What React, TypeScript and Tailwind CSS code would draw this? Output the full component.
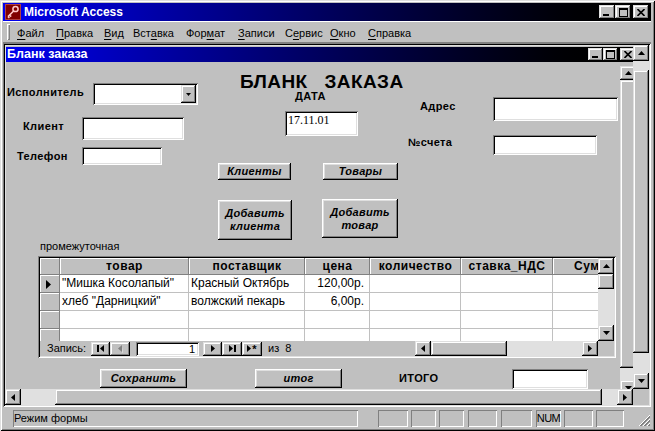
import React from 'react'

const RAISED = 'shadow-[inset_-1px_-1px_#000,inset_1px_1px_#fff,inset_-2px_-2px_#808080,inset_2px_2px_#dfdfdf]'
const SBTN = 'shadow-[inset_-1px_-1px_#000,inset_1px_1px_#dfdfdf,inset_-2px_-2px_#808080,inset_2px_2px_#fff]'
const SUNKEN = 'shadow-[inset_1px_1px_#808080,inset_-1px_-1px_#fff,inset_2px_2px_#000,inset_-2px_-2px_#dfdfdf]'
const THIN_UP = 'shadow-[inset_-1px_-1px_#808080,inset_1px_1px_#fff]'
const THIN_DOWN = 'shadow-[inset_1px_1px_#808080,inset_-1px_-1px_#fff]'
const TRACK = 'bg-[#e0e0e0]'
const THUMB = `bg-[#c0c0c0] ${SBTN}`

type Dir = 'up' | 'down' | 'left' | 'right'

function Tri({ dir, color = '#000' }: { dir: Dir; color?: string }) {
  const vertical = dir === 'up' || dir === 'down'
  const w = vertical ? 7 : 4
  const h = vertical ? 4 : 7
  const pts = {
    up: '3.5,0 7,4 0,4',
    down: '0,0 7,0 3.5,4',
    left: '4,0 4,7 0,3.5',
    right: '0,0 4,3.5 0,7',
  }[dir]
  return (
    <svg width={w} height={h} viewBox={`0 0 ${w} ${h}`}>
      <polygon points={pts} fill={color} />
    </svg>
  )
}

function SBtn({ dir, className }: { dir: Dir; className: string }) {
  return (
    <div className={`shrink-0 bg-[#c0c0c0] flex items-center justify-center ${SBTN} ${className}`}>
      <Tri dir={dir} />
    </div>
  )
}

function CapBtn({ kind, className }: { kind: 'min' | 'max' | 'close'; className: string }) {
  return (
    <div className={`shrink-0 bg-[#c0c0c0] flex justify-center ${SBTN} ${kind === 'min' ? 'items-end pb-[3px]' : 'items-center'} ${className}`}>
      {kind === 'min' && (
        <svg width="8" height="2" viewBox="0 0 8 2">
          <rect x="0" y="0" width="6" height="2" fill="#000" />
        </svg>
      )}
      {kind === 'max' && (
        <svg width="9" height="9" viewBox="0 0 9 9">
          <rect x="0.5" y="0.5" width="8" height="8" fill="none" stroke="#000" />
          <rect x="0" y="0" width="9" height="2" fill="#000" />
        </svg>
      )}
      {kind === 'close' && (
        <svg width="8" height="7" viewBox="0 0 8 7">
          <path d="M0.5 0 L7.5 7 M7.5 0 L0.5 7" stroke="#000" strokeWidth="1.6" />
        </svg>
      )}
    </div>
  )
}

function Label({ className, children }: { className: string; children: React.ReactNode }) {
  return <span className={`shrink-0 text-[11px] font-bold leading-none tracking-[0.4px] whitespace-nowrap ${className}`}>{children}</span>
}

function Field({ className, children }: { className: string; children?: React.ReactNode }) {
  return <div className={`shrink-0 bg-white ${SUNKEN} ${className}`}>{children}</div>
}

function FBtn({ className, children }: { className: string; children: React.ReactNode }) {
  return (
    <div className={`shrink-0 bg-[#c0c0c0] ${RAISED} flex items-center justify-center text-center text-[11px] font-bold italic tracking-[0.3px] leading-[13px] ${className}`}>
      {children}
    </div>
  )
}

const MENU = [
  { pre: '', u: 'Ф', post: 'айл', w: 'w-[39px]' },
  { pre: '', u: 'П', post: 'равка', w: 'w-[48px]' },
  { pre: '', u: 'В', post: 'ид', w: 'w-[29px]' },
  { pre: 'Вст', u: 'а', post: 'вка', w: 'w-[53px]' },
  { pre: 'Фор', u: 'м', post: 'ат', w: 'w-[52px]' },
  { pre: '', u: 'З', post: 'аписи', w: 'w-[47px]' },
  { pre: 'С', u: 'е', post: 'рвис', w: 'w-[45px]' },
  { pre: '', u: 'О', post: 'кно', w: 'w-[38px]' },
  { pre: '', u: 'С', post: 'правка', w: 'w-[50px]' },
]

const COLS = [
  { t: 'товар', w: 'w-[129px]', r: false },
  { t: 'поставщик', w: 'w-[116px]', r: false },
  { t: 'цена', w: 'w-[65px]', r: true },
  { t: 'количество', w: 'w-[91px]', r: false },
  { t: 'ставка_НДС', w: 'w-[92px]', r: false },
  { t: 'Сумма', w: 'w-[84px]', r: false },
]

const ROWS = [
  ['"Мишка Косолапый"', 'Красный Октябрь', '120,00р.', '', '', ''],
  ['хлеб "Дарницкий"', 'волжский пекарь', '6,00р.', '', '', ''],
  ['', '', '', '', '', ''],
  ['', '', '', '', '', ''],
]

function AccessIcon() {
  return (
    <svg width="16" height="16" viewBox="0 0 16 16">
      <rect x="0" y="0" width="16" height="16" fill="#800000" />
      <rect x="0.5" y="0.5" width="15" height="15" fill="none" stroke="#b04040" />
      <circle cx="10.5" cy="5" r="2.6" fill="none" stroke="#ffc8c8" strokeWidth="1.5" />
      <path d="M8.6 7 L3 12.6 M4.6 11 L6.2 12.6 M3 12.6 L4.4 14" stroke="#ffc8c8" strokeWidth="1.5" fill="none" />
    </svg>
  )
}

function Datasheet() {
  return (
    <div className={`ml-[32px] w-[578px] h-[102px] shrink-0 bg-[#c0c0c0] p-[2px] ${SUNKEN} flex flex-col`}>
      <div className="flex h-[83px]">
        <div className="w-[558px] overflow-hidden bg-white">
          <div className="flex h-[17px] w-[700px]">
            <div className={`w-[20px] shrink-0 bg-[#c0c0c0] ${THIN_UP}`} />
            {COLS.map((c) => (
              <div
                key={c.t}
                className={`${c.w} shrink-0 bg-[#c0c0c0] ${THIN_UP} text-[12px] font-bold tracking-[0.5px] text-center leading-[17px] whitespace-nowrap overflow-hidden`}
              >
                {c.t}
              </div>
            ))}
          </div>
          {ROWS.map((row, i) => (
            <div key={i} className="flex h-[18px] w-[700px]">
              <div className={`w-[20px] shrink-0 bg-[#c0c0c0] ${THIN_UP} flex items-center pl-[6px]`}>
                {i === 0 && (
                  <svg width="5" height="9" viewBox="0 0 5 9">
                    <polygon points="0,0 5,4.5 0,9" fill="#000" />
                  </svg>
                )}
              </div>
              {row.map((v, j) => (
                <div
                  key={j}
                  className={`${COLS[j].w} shrink-0 border-r border-b border-[#c0c0c0] text-[12px] leading-[17px] whitespace-nowrap overflow-hidden ${
                    COLS[j].r ? 'text-right pr-[5px]' : 'pl-[2px]'
                  }`}
                >
                  {v}
                </div>
              ))}
            </div>
          ))}
        </div>
        <div className="w-[16px] flex flex-col">
          <SBtn dir="up" className="h-[16px]" />
          <div className={`h-[15px] ${THUMB}`} />
          <div className={`flex-1 ${TRACK}`} />
          <SBtn dir="down" className="h-[16px]" />
        </div>
      </div>
      <div className="flex h-[15px] items-center">
        <div className="w-[375px] flex items-center text-[11px]">
          <span className="w-[51px] pl-[7px] leading-none">Запись:</span>
          <div className={`w-[19px] h-[14px] bg-[#c0c0c0] ${SBTN} flex items-center justify-center`}>
            <svg width="7" height="7" viewBox="0 0 7 7">
              <rect x="0" y="0" width="2" height="7" fill="#000" />
              <polygon points="7,0 7,7 3,3.5" fill="#000" />
            </svg>
          </div>
          <div className={`w-[20px] h-[14px] bg-[#c0c0c0] ${SBTN} flex items-center justify-center`}>
            <svg width="5" height="8" viewBox="0 0 5 8">
              <polygon points="4,0 4,7 0,3.5" fill="#808080" />
              <polygon points="5,1 5,8 4.5,7.5" fill="#fff" />
            </svg>
          </div>
          <div className={`ml-[6px] w-[63px] h-[14px] bg-white ${SUNKEN} text-right pr-[4px] text-[11px] leading-[14px]`}>1</div>
          <div className={`ml-[4px] w-[19px] h-[14px] bg-[#c0c0c0] ${SBTN} flex items-center justify-center`}>
            <Tri dir="right" />
          </div>
          <div className={`w-[20px] h-[14px] bg-[#c0c0c0] ${SBTN} flex items-center justify-center`}>
            <svg width="7" height="7" viewBox="0 0 7 7">
              <polygon points="0,0 4,3.5 0,7" fill="#000" />
              <rect x="5" y="0" width="2" height="7" fill="#000" />
            </svg>
          </div>
          <div className={`w-[20px] h-[14px] bg-[#c0c0c0] ${SBTN} flex items-center justify-center gap-[1px]`}>
            <Tri dir="right" />
            <span className="text-[11px] font-bold leading-none mt-[2px]">*</span>
          </div>
          <span className="ml-[6px] leading-none">из&nbsp;&nbsp;8</span>
        </div>
        <div className="w-[183px] h-[15px] flex">
          <SBtn dir="left" className="w-[16px]" />
          <div className={`w-[76px] ${THUMB}`} />
          <div className={`flex-1 ${TRACK}`} />
          <SBtn dir="right" className="w-[16px]" />
        </div>
        <div className="w-[16px] h-[15px] bg-[#c0c0c0]" />
      </div>
    </div>
  )
}

function FormBody() {
  return (
    <div className="w-[614px] h-[342px] shrink-0 flex flex-col bg-[#c0c0c0]">
      <div className="flex h-[177px] shrink-0">
        <div className="w-[194px] shrink-0 flex flex-col pt-[20px]">
          <div className="flex items-start">
            <Label className="ml-[1px] w-[86px] mt-[4px]">Исполнитель</Label>
            <Field className="w-[105px] h-[22px] flex justify-end p-[2px]">
              <div className={`w-[15px] h-full bg-[#c0c0c0] ${SBTN} flex items-center justify-center`}>
                <svg width="5" height="3" viewBox="0 0 5 3">
                  <polygon points="0,0 5,0 2.5,3" fill="#000" />
                </svg>
              </div>
            </Field>
          </div>
          <div className="flex items-start mt-[12px]">
            <Label className="ml-[17px] w-[59px] mt-[4px]">Клиент</Label>
            <Field className="w-[102px] h-[23px]" />
          </div>
          <div className="flex items-start mt-[7px]">
            <Label className="ml-[11px] w-[65px] mt-[4px]">Телефон</Label>
            <Field className="w-[80px] h-[18px]" />
          </div>
        </div>

        <div className="w-[205px] shrink-0 flex flex-col">
          <div className="mt-[9px] ml-[40px] flex gap-[17px] text-[19px] font-bold tracking-[0.4px] leading-none whitespace-nowrap">
            <span>БЛАНК</span>
            <span>ЗАКАЗА</span>
          </div>
          <Label className="ml-[95px]">ДАТА</Label>
          <Field className="mt-[9px] ml-[85px] w-[73px] h-[25px] pl-[3px] pt-[3px] font-['Liberation_Serif',serif] text-[12px] leading-[13px]">
            17.11.01
          </Field>
          <div className="flex mt-[27px]">
            <FBtn className="ml-[18px] w-[73px] h-[17px]">Клиенты</FBtn>
            <FBtn className="ml-[32px] w-[75px] h-[17px]">Товары</FBtn>
          </div>
          <div className="flex items-start mt-[19px]">
            <FBtn className="ml-[18px] w-[74px] h-[40px] mt-[1px]">
              Добавить
              <br />
              клиента
            </FBtn>
            <FBtn className="ml-[30px] w-[76px] h-[39px]">
              Добавить
              <br />
              товар
            </FBtn>
          </div>
        </div>

        <div className="flex-1 flex flex-col">
          <div className="flex items-start mt-[34px]">
            <Label className="ml-[15px] w-[73px] mt-[4px]">Адрес</Label>
            <Field className="w-[125px] h-[24px]" />
          </div>
          <div className="flex items-start mt-[14px]">
            <Label className="ml-[3px] w-[85px] mt-[2px]">№счета</Label>
            <Field className="w-[104px] h-[20px]" />
          </div>
        </div>
      </div>

      <div className="h-[16px] shrink-0 pl-[34px] text-[11px] leading-[12px]">промежуточная</div>

      <Datasheet />

      <div className="flex items-start mt-[11px] shrink-0">
        <FBtn className="ml-[94px] w-[87px] h-[19px]">Сохранить</FBtn>
        <FBtn className="ml-[68px] w-[87px] h-[19px]">итог</FBtn>
        <Label className="ml-[57px] w-[113px] mt-[4px]">ИТОГО</Label>
        <Field className="w-[76px] h-[20px]" />
      </div>
    </div>
  )
}

function ChildWindow() {
  return (
    <div className="w-[628px] h-[344px] overflow-hidden bg-[#808080] shrink-0">
      <div className="w-[634px] h-[360px] bg-[#c0c0c0] pl-[1px] pt-[2px] shadow-[inset_1px_1px_#dfdfdf]">
        <div className="w-[630px] h-[15px] flex items-center bg-linear-to-r from-[#0000f0] to-black">
          <span className="ml-[1px] text-white font-bold text-[12.5px] leading-none whitespace-nowrap">Бланк заказа</span>
          <div className="ml-auto flex items-center mr-[1px]">
            <CapBtn kind="min" className="w-[15px] h-[13px]" />
            <CapBtn kind="max" className="w-[15px] h-[13px]" />
            <CapBtn kind="close" className="ml-[2px] w-[15px] h-[13px]" />
          </div>
        </div>
        <div className="mt-[1px] flex">
          <FormBody />
          <div className="w-[16px] shrink-0 flex flex-col pt-[3px]">
            <SBtn dir="up" className="h-[14px]" />
            <div className={`h-[288px] ${THUMB}`} />
            <div className={`h-[12px] ${TRACK}`} />
            <SBtn dir="down" className="h-[16px]" />
          </div>
        </div>
      </div>
    </div>
  )
}

export default function App() {
  return (
    <div className="w-[655px] h-[431px] bg-[#c0c0c0] pt-[3px] pl-[3px] pr-[4px] pb-[3px] flex flex-col overflow-hidden text-black font-['Liberation_Sans',Arial,sans-serif] shadow-[inset_1px_1px_#dfdfdf,inset_-1px_-1px_#000,inset_2px_2px_#fff,inset_-2px_-2px_#808080]">
      <div className="h-[18px] shrink-0 flex items-center bg-linear-to-r from-[#0000f0] to-black pl-[2px] pr-[2px]">
        <AccessIcon />
        <span className="ml-[3px] text-white font-bold text-[12px] leading-none whitespace-nowrap">Microsoft Access</span>
        <div className="ml-auto flex items-center">
          <CapBtn kind="min" className="w-[16px] h-[14px]" />
          <CapBtn kind="max" className="w-[16px] h-[14px]" />
          <CapBtn kind="close" className="ml-[2px] w-[16px] h-[14px]" />
        </div>
      </div>

      <div className="h-[22px] shrink-0 flex items-center pl-[4px] text-[11px] shadow-[inset_0_1px_#fff,inset_0_-1px_#808080]">
        <div className="w-[3px] h-[16px] shadow-[inset_1px_1px_#fff,inset_-1px_-1px_#808080]" />
        <div className="ml-[7px] flex mt-[2px]">
          {MENU.map((m) => (
            <span key={m.pre + m.u + m.post} className={`${m.w} shrink-0 whitespace-nowrap leading-none`}>
              {m.pre}
              <span className="underline underline-offset-2">{m.u}</span>
              {m.post}
            </span>
          ))}
        </div>
      </div>

      <div className={`h-[364px] shrink-0 p-[2px] ${SUNKEN} flex flex-col`}>
        <div className="flex h-[344px]">
          <ChildWindow />
          <div className="w-[16px] flex flex-col">
            <SBtn dir="up" className="h-[16px]" />
            <div className={`h-[9px] ${TRACK}`} />
            <div className={`h-[283px] ${THUMB}`} />
            <div className={`flex-1 ${TRACK}`} />
            <SBtn dir="down" className="h-[16px]" />
          </div>
        </div>
        <div className="flex h-[16px]">
          <SBtn dir="left" className="w-[16px]" />
          <div className={`w-[34px] ${TRACK}`} />
          <div className={`w-[547px] ${THUMB}`} />
          <div className={`flex-1 ${TRACK}`} />
          <SBtn dir="right" className="w-[16px]" />
          <div className="w-[16px] bg-[#c0c0c0]" />
        </div>
      </div>

      <div className="h-[21px] shrink-0 flex items-start pt-[3px] text-[11px]">
        <div className={`ml-[10px] w-[345px] h-[17px] ${THIN_DOWN} leading-[17px] pl-[1px]`}>Режим формы</div>
        <div className={`ml-[20px] w-[30px] h-[17px] ${THIN_DOWN}`} />
        <div className={`ml-[3px] w-[25px] h-[17px] ${THIN_DOWN}`} />
        <div className={`ml-[3px] w-[25px] h-[17px] ${THIN_DOWN}`} />
        <div className={`ml-[4px] w-[29px] h-[17px] ${THIN_DOWN}`} />
        <div className={`ml-[4px] w-[31px] h-[17px] ${THIN_DOWN}`} />
        <div className={`ml-[4px] w-[25px] h-[17px] ${THIN_DOWN} leading-[17px] text-center tracking-[-0.5px]`}>NUM</div>
        <div className={`ml-[3px] w-[29px] h-[17px] ${THIN_DOWN}`} />
        <div className={`ml-[3px] w-[28px] h-[17px] ${THIN_DOWN}`} />
        <div className="ml-auto self-end mb-[1px]">
          <svg width="12" height="12" viewBox="0 0 12 12">
            <path d="M11 1 L1 11 M11 5 L5 11 M11 9 L9 11" stroke="#808080" strokeWidth="1" />
            <path d="M11 2 L2 11 M11 6 L6 11 M11 10 L10 11" stroke="#808080" strokeWidth="1" />
            <path d="M11 0 L0 11 M11 4 L4 11 M11 8 L8 11" stroke="#fff" strokeWidth="1" />
          </svg>
        </div>
      </div>
    </div>
  )
}
